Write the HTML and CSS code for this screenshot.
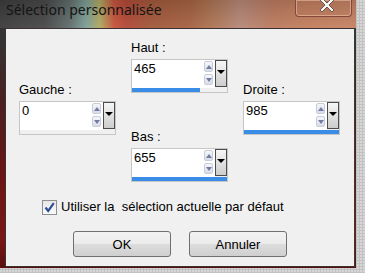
FILE: index.html
```html
<!DOCTYPE html>
<html>
<head>
<meta charset="utf-8" />
<title>Sélection personnalisée</title>
<link rel="stylesheet" href="styles.css">
</head>
<body>

<div class="window">

<div class="titlebar">
  <span class="title">Sélection personnalisée</span>
  <div class="close">
    <svg width="16" height="12" viewBox="0 0 16 12">
      <path d="M3 -2 L8 3 L13 -2 L15 0 L10 5 L15 10 L13 12 L8 7 L3 12 L1 10 L6 5 L1 0 Z" fill="#f4f4f4" stroke="#5a3a30" stroke-width="0.8"/>
    </svg>
  </div>
</div>

<div class="client">

  <div class="fields">

    <div class="col col-side">
      <div class="label">Gauche :</div>
      <div class="spin-box">
        <div class="box-row">
          <div class="input"><span class="value">0</span><div class="arrows"><span class="arrow up"></span><span class="arrow down"></span></div></div>
          <div class="drop"><span class="tri"></span></div>
        </div>
        <div class="bar" style="width: 0%"></div>
      </div>
    </div>

    <div class="col">
      <div class="label">Haut :</div>
      <div class="spin-box">
        <div class="box-row">
          <div class="input"><span class="value">465</span><div class="arrows"><span class="arrow up"></span><span class="arrow down"></span></div></div>
          <div class="drop"><span class="tri"></span></div>
        </div>
        <div class="bar" style="width: 72%"></div>
      </div>

      <div class="label label-bas">Bas :</div>
      <div class="spin-box">
        <div class="box-row">
          <div class="input"><span class="value">655</span><div class="arrows"><span class="arrow up"></span><span class="arrow down"></span></div></div>
          <div class="drop"><span class="tri"></span></div>
        </div>
        <div class="bar" style="width: 100%"></div>
      </div>
    </div>

    <div class="col col-side">
      <div class="label">Droite :</div>
      <div class="spin-box">
        <div class="box-row">
          <div class="input"><span class="value">985</span><div class="arrows"><span class="arrow up"></span><span class="arrow down"></span></div></div>
          <div class="drop"><span class="tri"></span></div>
        </div>
        <div class="bar" style="width: 100%"></div>
      </div>
    </div>

  </div>

  <div class="check-row">
    <span class="checkbox">
      <svg width="13" height="13" viewBox="0 0 13 13">
        <path d="M2.5 6.5 L5.2 10 L10.8 2.2" fill="none" stroke="#2c4f93" stroke-width="2.2"/>
      </svg>
    </span>
    <span class="check-label">Utiliser la&nbsp; sélection actuelle par défaut</span>
  </div>

  <div class="buttons">
    <button type="button" class="btn">OK</button>
    <button type="button" class="btn">Annuler</button>
  </div>

</div>

</div>

</body>
</html>
```

FILE: styles.css
```css
body
{
    margin: 0;
    font-family: "Liberation Sans", Arial, sans-serif;
    font-size: 13px;
    color: #000;
    background-color: #c2c2c2;
    background-image: radial-gradient(circle at 1px 1px, #d6d6d6 1px, transparent 1px);
    background-size: 3px 3px;
}

.window
{
    width: 356px;
    height: 268px;
    display: flex;
    flex-direction: column;
    background: linear-gradient(to bottom, #3a3a3a 0, #333 40px, #4a2020 100px, #6e1414 180px, #7a1616 240px, #5a0c0c 268px);
}

.titlebar
{
    height: 28px;
    flex: none;
    display: flex;
    justify-content: space-between;
    align-items: flex-start;
    background:
        linear-gradient(to bottom, rgba(0, 0, 0, 0.14), rgba(255, 255, 255, 0.04)),
        linear-gradient(to right, #3e3e3e 0, #4a4a4a 45px, #63706e 70px, #7fa09a 86px, #b2aa62 100px, #c8553e 114px, #b44a38 126px, #a45a3c 150px, #a86444 190px, #b07858 215px, #b8897a 240px, #bd7d62 270px, #c4805f 310px, #c78466 356px);
}

.title
{
    padding-left: 6px;
    font-family: "Noto Sans", "Open Sans", sans-serif;
    font-size: 14px;
    line-height: 20px;
    color: #141414;
}

.close
{
    width: 57px;
    height: 17px;
    margin-right: 4px;
    box-sizing: border-box;
    border: 1px solid #84483a;
    border-top: none;
    border-radius: 0 0 4px 4px;
    box-shadow: inset 0 0 0 1px rgba(255, 214, 190, 0.45);
    display: flex;
    justify-content: center;
    padding-left: 6px;
}

.client
{
    flex: 1;
    margin: 0 1px 1px 5px;
    background: #f0f0f0;
    border: 1px solid #3b3333;
    border-right-color: #2e4030;
}

.fields
{
    display: flex;
    gap: 15px;
    padding: 11px 0 0 13px;
}

.col
{
    display: flex;
    flex-direction: column;
}

.col-side
{
    margin-top: 42px;
}

.label
{
    line-height: 15px;
    margin-bottom: 4px;
}

.label-bas
{
    margin-top: 36px;
}

.spin-box
{
    width: 97px;
    height: 34px;
    box-sizing: border-box;
    border: 1px solid #c6c6c6;
    background: #f0f0f0;
}

.box-row
{
    display: flex;
    height: 28px;
}

.input
{
    flex: 1;
    background: #fff;
    display: flex;
    justify-content: space-between;
    padding-left: 2px;
}

.value
{
    line-height: 15px;
    padding-top: 1px;
}

.arrows
{
    display: flex;
    flex-direction: column;
    gap: 2px;
    padding: 1px 2px 0 0;
}

.arrow
{
    width: 9px;
    height: 11px;
    box-sizing: border-box;
    border: 1px solid #c8ccd8;
    border-radius: 2px;
    background: linear-gradient(#f6f7fb, #d9dde8);
    position: relative;
}

.arrow::after
{
    content: "";
    position: absolute;
    left: 1px;
    border-left: 3px solid transparent;
    border-right: 3px solid transparent;
}

.up::after
{
    top: 3px;
    border-bottom: 4px solid #737ba3;
}

.down::after
{
    top: 3px;
    border-top: 4px solid #737ba3;
}

.drop
{
    width: 12px;
    height: 27px;
    box-sizing: border-box;
    border: 1px solid #4c4c4c;
    background: linear-gradient(#f6f6f6, #cdcdcd);
    display: flex;
    justify-content: center;
    padding-top: 9px;
}

.tri
{
    width: 0;
    height: 0;
    border-left: 4px solid transparent;
    border-right: 4px solid transparent;
    border-top: 4px solid #000;
}

.bar
{
    height: 4px;
    background: #3a8de6;
}

.check-row
{
    display: flex;
    align-items: flex-start;
    gap: 4px;
    margin: 17px 0 0 36px;
}

.checkbox
{
    width: 15px;
    height: 15px;
    box-sizing: border-box;
    border: 1px solid #8e8f8f;
    background: linear-gradient(#e6e6e6, #fbfbfb);
    display: flex;
    align-items: center;
    justify-content: center;
    margin-top: 1px;
}

.check-label
{
    line-height: 15px;
}

.buttons
{
    display: flex;
    gap: 18px;
    margin-top: 16px;
    padding-left: 67px;
}

.btn
{
    width: 98px;
    height: 26px;
    border: 1px solid #707070;
    border-radius: 3px;
    background: linear-gradient(#f2f2f2 0, #ebebeb 50%, #dddddd 50%, #cfcfcf 100%);
    font-family: "Liberation Sans", Arial, sans-serif;
    font-size: 13px;
    color: #000;
    padding: 0;
}
```
